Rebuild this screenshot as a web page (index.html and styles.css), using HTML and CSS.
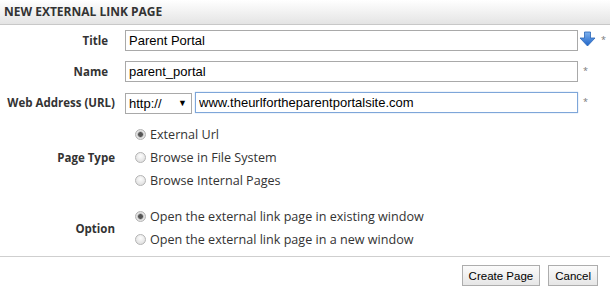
FILE: index.html
```html
<!DOCTYPE html>
<html lang="en">
<head>
    <meta charset="UTF-8">
    <title>New External Link Page</title>
    <link rel="stylesheet" href="styles.css">
</head>
<body>
    <div class="panel">
        <div class="panel-head">NEW EXTERNAL LINK PAGE</div>

        <form class="form">
            <label class="lbl lbl-pad" for="title">Title</label>
            <div class="field">
                <input type="text" id="title" class="txt" value="Parent Portal">
                <svg class="move" width="17" height="16" viewBox="0 0 17 16">
                    <defs>
                        <linearGradient id="blue" x1="0" y1="0" x2="0" y2="1">
                            <stop offset="0" stop-color="#7fb2ee"/>
                            <stop offset="1" stop-color="#1d64c8"/>
                        </linearGradient>
                    </defs>
                    <path d="M5.5 1h6v6h4.5l-7.5 8l-7.5-8h4.5z" fill="url(#blue)" stroke="#2a66b8" stroke-width="0.8"/>
                </svg>
                <span class="req">*</span>
            </div>

            <label class="lbl lbl-pad" for="name">Name</label>
            <div class="field">
                <input type="text" id="name" class="txt" value="parent_portal">
                <span class="req">*</span>
            </div>

            <label class="lbl" for="url">Web Address (URL)</label>
            <div class="field">
                <div class="select-wrap">
                    <select class="proto">
                        <option>http://</option>
                        <option>https://</option>
                    </select>
                </div>
                <input type="text" id="url" class="txt txt-url focus" value="www.theurlfortheparentportalsite.com">
                <span class="req">*</span>
            </div>

            <div class="lbl">Page Type</div>
            <div class="radios">
                <label class="radio"><input type="radio" name="ptype" checked> External Url</label>
                <label class="radio"><input type="radio" name="ptype"> Browse in File System</label>
                <label class="radio"><input type="radio" name="ptype"> Browse Internal Pages</label>
            </div>

            <div class="lbl lbl-opt">Option</div>
            <div class="radios radios-opt">
                <label class="radio"><input type="radio" name="opt" checked> Open the external link page in existing window</label>
                <label class="radio"><input type="radio" name="opt"> Open the external link page in a new window</label>
            </div>
        </form>

        <div class="panel-foot">
            <button type="button" class="btn">Create Page</button>
            <button type="button" class="btn">Cancel</button>
        </div>
    </div>
</body>
</html>
```

FILE: styles.css
```css
body { margin: 0; background: #fff; font-family: "Open Sans", Arial, sans-serif; color: #333; }
.panel { width: 610px; }
.panel-head { height: 24px; line-height: 24px; padding-left: 4px; font-size: 12px; font-weight: bold; color: #333; background: linear-gradient(#fff, #e4e4e4); border-bottom: 1px solid #c8c8c8; }

.form { display: grid; grid-template-columns: 115px 1fr; column-gap: 10px; row-gap: 10px; padding: 5px 0 0; }
.lbl { font-size: 11.5px; font-weight: bold; text-align: right; color: #333; align-self: center; }
.lbl-pad { padding-right: 7px; }
.lbl-opt { margin-top: 3px; }
.field { display: flex; align-items: center; height: 21px; }

.txt { box-sizing: border-box; width: 453px; height: 21px; padding: 0 3px; border: 1px solid #a9a9a9; font-family: "Liberation Sans", Arial, sans-serif; font-size: 13px; color: #000; outline: none; }
.txt-url { width: 383px; margin-left: 3px; }
.focus { border-color: #7ea6d9; box-shadow: 0 0 1px #9bbbe6; }
.move { margin-left: 1px; margin-top: -4px; }
.req { margin-left: 5px; font-size: 9px; color: #777; align-self: flex-start; margin-top: 3px; }

.select-wrap { position: relative; }
.select-wrap::after { content: "\25BC"; position: absolute; right: 5px; top: 5px; font-size: 9px; color: #000; pointer-events: none; }
.proto { appearance: none; -webkit-appearance: none; box-sizing: border-box; width: 67px; height: 21px; padding: 0 3px; border: 1px solid #a9a9a9; border-radius: 0; background: #fff; font-family: "Liberation Sans", Arial, sans-serif; font-size: 13px; color: #000; }

.radios { display: flex; flex-direction: column; }
.radios-opt { margin-top: 3px; }
.radio { display: flex; align-items: center; height: 23px; padding-left: 10px; font-size: 12.6px; color: #333; }
.radio input { appearance: none; -webkit-appearance: none; width: 11px; height: 11px; margin: 0 4px 0 0; border: 1px solid #b4b4b4; border-radius: 50%; background: radial-gradient(circle at 50% 35%, #fdfdfd, #d8d8d8); }
.radio input:checked { background: radial-gradient(circle, #555 0 2px, #9a9a9a 2.5px, #e6e6e6 3.5px, #d4d4d4); }

.panel-foot { display: flex; justify-content: flex-end; gap: 8px; margin-top: 5px; padding: 8px 12px 0 0; border-top: 1px solid #cfcfcf; }
.btn { height: 21px; padding: 0 6px; border: 1px solid #adadad; background: linear-gradient(#fbfbfb, #e6e6e6); font-family: "Liberation Sans", Arial, sans-serif; font-size: 11.5px; color: #000; }
```
